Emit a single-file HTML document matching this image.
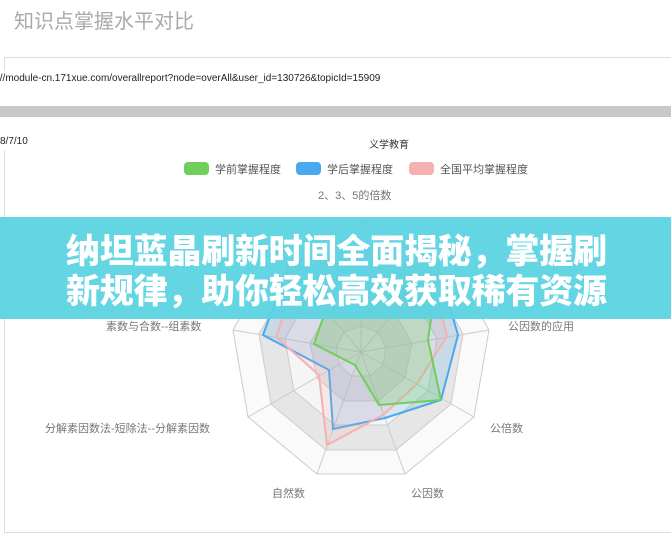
<!DOCTYPE html>
<html><head><meta charset="utf-8"><style>
body{margin:0;width:671px;height:539px;background:#fff;position:relative;overflow:hidden;font-family:"Liberation Sans","Noto Sans CJK SC",sans-serif;}
.a{position:absolute;white-space:nowrap;}
</style></head><body>
<div class="a" style="left:14px;top:5px;font-size:20px;color:#aaa;">知识点掌握水平对比</div>
<div class="a" style="left:4px;top:57px;width:680px;height:1px;background:#ddd"></div>
<div class="a" style="left:4px;top:57px;width:1px;height:14px;background:#ddd"></div>
<div class="a" style="left:-3px;top:73px;font-size:10px;color:#222;">://module-cn.171xue.com/overallreport?node=overAll&amp;user_id=130726&amp;topicId=15909</div>
<div class="a" style="left:0;top:106px;width:671px;height:11px;background:#c8c8c8"></div>
<div class="a" style="left:0;top:136px;font-size:10px;color:#222;">8/7/10</div>
<div class="a" style="left:4px;top:150px;width:1px;height:383px;background:#ddd"></div>
<div class="a" style="left:4px;top:532px;width:680px;height:1px;background:#ddd"></div>
<div class="a" style="left:369px;top:136px;font-size:10px;color:#333;">义学教育</div>
<svg class="a" style="left:0;top:0" width="671" height="539">
<rect x="184" y="162" width="25" height="13" rx="4" fill="#6fcf5a"/>
<rect x="296" y="162" width="25" height="13" rx="4" fill="#4aa8ee"/>
<rect x="409" y="162" width="25" height="13" rx="4" fill="#f7b0b0"/>
<g font-size="11" fill="#555" font-family="Liberation Sans,Noto Sans CJK SC,sans-serif">
<text x="215" y="173">学前掌握程度</text><text x="327" y="173">学后掌握程度</text><text x="440" y="173">全国平均掌握程度</text>
</g>
<g font-size="11" fill="#777" font-family="Liberation Sans,Noto Sans CJK SC,sans-serif">
<text x="318" y="199">2、3、5的倍数</text>
<text x="508" y="330">公因数的应用</text>
<text x="490" y="432">公倍数</text>
<text x="411" y="497">公因数</text>
<text x="272" y="497">自然数</text>
<text x="45" y="432">分解素因数法-短除法--分解素因数</text>
<text x="106" y="330">素数与合数--组素数</text>
</g>
<g stroke="#ccc" stroke-width="1">
<polygon points="361,222 445,252 489,330 474,417 405,474 317,474 248,417 233,330 277,252" fill="#fafafa"/>
<polygon points="361,248 428,272 463,334 451,404 396,450 326,450 271,404 259,334 294,272" fill="#e6e6e6"/>
<polygon points="361,274 411,292 437,339 428,391 387,425 335,425 294,391 285,339 311,292" fill="#f5f5f5"/>
<polygon points="361,300 394,312 412,343 405,378 378,401 344,401 317,378 310,343 328,312" fill="#e3e3e3"/>
<polygon points="361,326 378,332 386,348 383,365 370,376 352,376 339,365 336,348 344,332" fill="#eee"/>
<line x1="361" y1="352" x2="361" y2="222"/><line x1="361" y1="352" x2="445" y2="252"/><line x1="361" y1="352" x2="489" y2="330"/><line x1="361" y1="352" x2="474" y2="417"/><line x1="361" y1="352" x2="405" y2="474"/><line x1="361" y1="352" x2="317" y2="474"/><line x1="361" y1="352" x2="248" y2="417"/><line x1="361" y1="352" x2="233" y2="330"/><line x1="361" y1="352" x2="277" y2="252"/>
</g>
<polygon points="361,250 430,240 458,335 441,400 385,418 333,429 329,370 263,335 290,262" fill="rgba(74,168,238,0.18)" stroke="#4aa8ee" stroke-width="2"/>
<polygon points="361,255 425,250 447,336 417,384 383,415 327,445 319,375 276,337 300,268" fill="rgba(247,160,160,0.15)" stroke="#f7b0b0" stroke-width="2"/>
<polygon points="361,315 439,263 428,340 441,400 379,405 355,365 314,344 325,312" fill="rgba(111,207,90,0.25)" stroke="#6fcf5a" stroke-width="2"/>
</svg>
<div class="a" style="left:0;top:217px;width:671px;height:102px;background:rgba(92,211,226,0.95)"></div>
<div class="a" style="left:66px;top:229px;font-size:34px;line-height:40px;font-weight:900;color:#fff;letter-spacing:-0.2px;font-family:'Noto Sans CJK SC',sans-serif;">纳坦蓝晶刷新时间全面揭秘，掌握刷<br>新规律，助你轻松高效获取稀有资源</div>
</body></html>
